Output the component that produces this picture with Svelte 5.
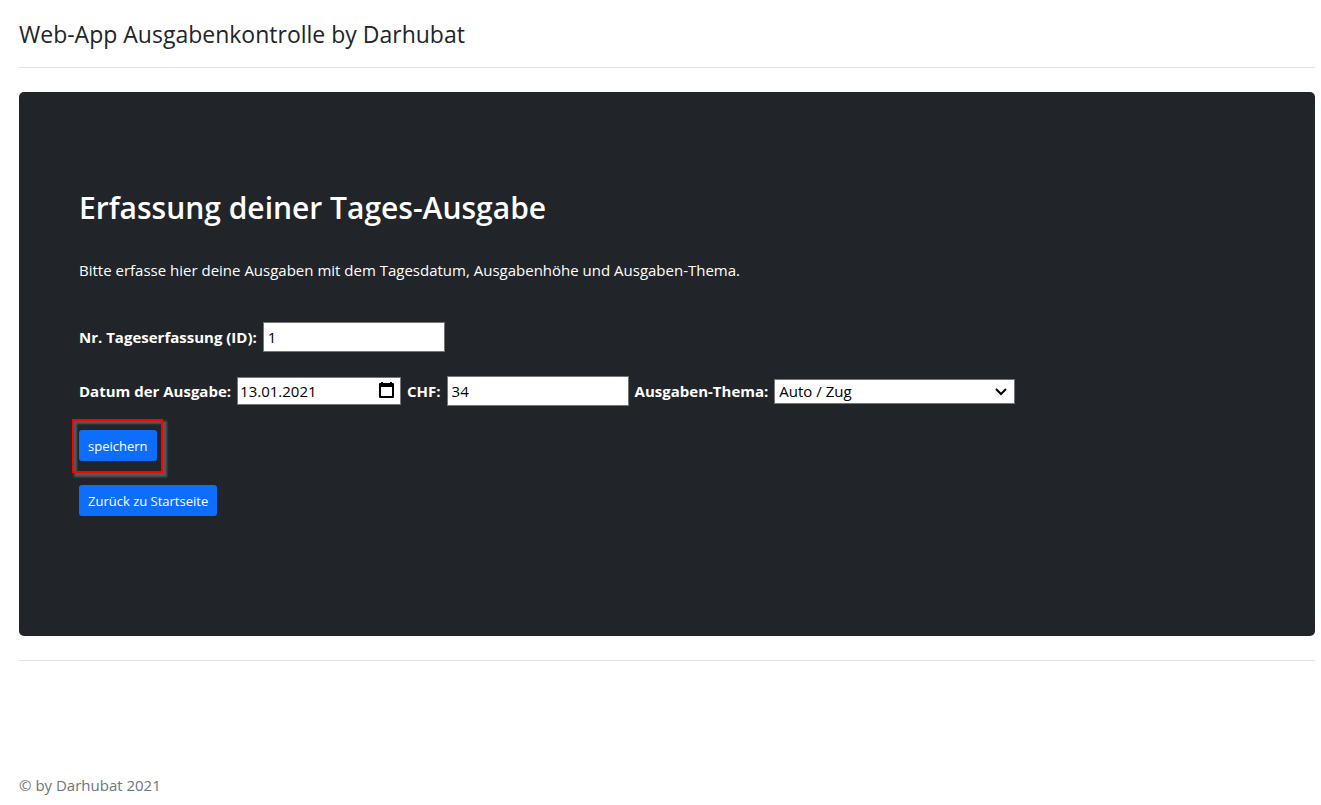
<script>
  let id = $state('1');
  let date = $state('13.01.2021');
  let amount = $state('34');
  let topic = $state('Auto / Zug');
  const topics = ['Auto / Zug', 'Lebensmittel', 'Wohnen', 'Freizeit'];
</script>

<div class="page">
  <header>
    <span class="brand">Web-App Ausgabenkontrolle by Darhubat</span>
  </header>

  <main>
    <h1>Erfassung deiner Tages-Ausgabe</h1>
    <p>Bitte erfasse hier deine Ausgaben mit dem Tagesdatum, Ausgabenhöhe und Ausgaben-Thema.</p>

    <form onsubmit={(e) => e.preventDefault()}>
      <div class="row">
        <label for="id">Nr. Tageserfassung (ID):</label>
        <input id="id" class="text" type="text" bind:value={id} />
      </div>

      <div class="row">
        <label for="date">Datum der Ausgabe:</label>
        <div class="date">
          <input id="date" type="text" inputmode="numeric" bind:value={date} />
          <button type="button" class="picker" aria-label="Kalender öffnen">
            <svg viewBox="0 0 15 17" width="15" height="17" aria-hidden="true">
              <path fill="#000" fill-rule="evenodd" d="M2 0h2v1h7V0h2v1h1q1 0 1 1v13q0 1-1 1H1q-1 0-1-1V2q0-1 1-1h1zM2 5v9h11V5z" />
            </svg>
          </button>
        </div>
        <label for="amount">CHF:</label>
        <input id="amount" class="text" type="text" bind:value={amount} />
        <label for="topic">Ausgaben-Thema:</label>
        <div class="select">
          <select id="topic" bind:value={topic}>
            {#each topics as t}
              <option>{t}</option>
            {/each}
          </select>
          <svg viewBox="0 0 12 8" width="12" height="8" aria-hidden="true">
            <path d="M1 1l5 5 5-5" fill="none" stroke="#000" stroke-width="2" />
          </svg>
        </div>
      </div>

      <div class="row">
        <div class="marked">
          <button type="submit" class="btn">speichern</button>
        </div>
      </div>
    </form>

    <a class="btn" href="#start">Zurück zu Startseite</a>
  </main>

  <footer>© by Darhubat 2021</footer>
</div>

<style>
  :global(body) {
    margin: 0;
    background: #fff;
  }

  .page {
    padding: 16px 6px 0 19px;
    font-family: 'Segoe UI', 'Open Sans', 'Noto Sans', sans-serif;
    font-size: 15px;
    line-height: 24px;
    color: #212529;
  }

  .page :is(input, select, button) {
    box-sizing: border-box;
    margin: 0;
    font-family: inherit;
  }

  header {
    padding-bottom: 15px;
    border-bottom: 1px solid #dee2e6;
    margin-bottom: 24px;
  }

  .brand {
    display: block;
    font-size: 23px;
    line-height: 36px;
  }

  main {
    padding: 98px 60px 120px;
    border-radius: 5px;
    background: #212529;
    color: #fff;
  }

  h1 {
    margin: 0 0 32px;
    font-size: 30px;
    font-weight: 600;
    line-height: 36px;
  }

  p {
    margin: 0 0 40px;
  }

  form {
    display: flex;
    flex-direction: column;
    gap: 24px;
    margin-bottom: 24px;
  }

  .row {
    display: flex;
    flex-wrap: wrap;
    align-items: center;
    gap: 6px;
  }

  label {
    font-weight: 700;
  }

  input,
  select {
    border: 1px solid #767676;
    border-radius: 0;
    background: #fff;
    color: #000;
    font-size: 15px;
  }

  .text {
    width: 182px;
    height: 30px;
    padding: 1px 4px;
  }

  .date {
    display: flex;
    position: relative;
  }

  .date input {
    width: 164px;
    height: 28px;
    padding: 1px 24px 1px 2px;
  }

  .picker {
    display: flex;
    position: absolute;
    top: 5px;
    right: 7px;
    padding: 0;
    border: 0;
    background: none;
  }

  .select {
    display: flex;
    position: relative;
  }

  select {
    width: 241px;
    height: 25px;
    padding: 0 24px 0 4px;
    appearance: none;
  }

  .select svg {
    position: absolute;
    top: 9px;
    right: 8px;
    pointer-events: none;
  }

  .btn {
    display: inline-block;
    box-sizing: border-box;
    height: 31px;
    padding: 6px 9px 4px;
    border: 0;
    border-radius: 3px;
    background: #0d6efd;
    color: #fff;
    font-size: 13px;
    line-height: 21px;
    text-decoration: none;
    vertical-align: top;
  }

  .marked {
    display: flex;
    position: relative;
  }

  .marked::after {
    content: '';
    position: absolute;
    inset: -11px -6px -12px -7px;
    border: 2px solid #f00;
    box-shadow:
      3px 3px 2px 1px #54585a,
      inset 3px 3px 2px #54585a;
    pointer-events: none;
  }

  footer {
    margin-top: 24px;
    padding-top: 112px;
    border-top: 1px solid #dee2e6;
    color: #6c757d;
  }
</style>
